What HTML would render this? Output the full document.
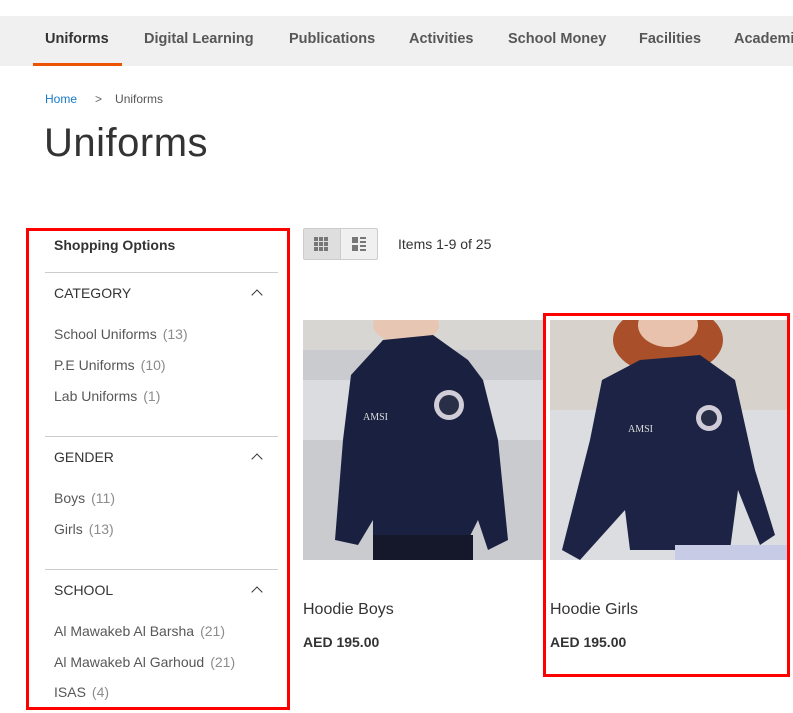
<!DOCTYPE html>
<html><head><meta charset="utf-8"><style>
*{margin:0;padding:0;box-sizing:border-box}
body{width:793px;height:713px;overflow:hidden;background:#fff;font-family:"Liberation Sans",sans-serif;color:#333;position:relative}
.a{position:absolute;white-space:nowrap}
.nav{position:absolute;left:0;top:16px;width:793px;height:50px;background:#f0f0f0}
.nav span{position:absolute;top:15px;font-weight:bold;font-size:14.5px;color:#575757}
.f{font-size:14px;color:#575757}
.f i{font-style:normal;color:#8c8c8c;margin-left:6px}
.h{font-size:14px;font-weight:bold;color:#333}
.line{position:absolute;left:45px;width:233px;height:1px;background:#ccc}
.chev{position:absolute;left:253px;width:8px;height:8px;border-left:1.5px solid #333;border-top:1.5px solid #333;transform:rotate(45deg)}
</style></head><body>
<div class="nav">
<span style="left:45px;color:#333">Uniforms</span>
<span style="left:144px">Digital Learning</span>
<span style="left:289px">Publications</span>
<span style="left:409px">Activities</span>
<span style="left:508px">School Money</span>
<span style="left:639px">Facilities</span>
<span style="left:734px">Academic</span>
<div style="position:absolute;left:33px;top:47px;width:89px;height:3px;background:#eb5202"></div>
</div>
<div class="a" style="left:45px;top:92px;font-size:12px"><span style="color:#1979c3">Home</span><span style="color:#666;margin:0 13px 0 18px">&gt;</span><span style="color:#555">Uniforms</span></div>
<div class="a" style="left:44px;top:121px;font-size:40px;font-weight:300;color:#333;letter-spacing:.5px">Uniforms</div>

<div style="position:absolute;left:26px;top:228px;width:264px;height:482px;border:3px solid #f00"></div>
<div class="a h" style="left:54px;top:237px">Shopping Options</div>
<div class="line" style="top:272px"></div>
<div class="a h" style="left:54px;top:285px;font-weight:normal;color:#333">CATEGORY</div><div class="chev" style="top:291px"></div>
<div class="a f" style="left:54px;top:326px">School Uniforms<i>(13)</i></div>
<div class="a f" style="left:54px;top:357px">P.E Uniforms<i>(10)</i></div>
<div class="a f" style="left:54px;top:388px">Lab Uniforms<i>(1)</i></div>
<div class="line" style="top:436px"></div>
<div class="a h" style="left:54px;top:449px;font-weight:normal">GENDER</div><div class="chev" style="top:455px"></div>
<div class="a f" style="left:54px;top:490px">Boys<i>(11)</i></div>
<div class="a f" style="left:54px;top:521px">Girls<i>(13)</i></div>
<div class="line" style="top:569px"></div>
<div class="a h" style="left:54px;top:582px;font-weight:normal">SCHOOL</div><div class="chev" style="top:588px"></div>
<div class="a f" style="left:54px;top:623px">Al Mawakeb Al Barsha<i>(21)</i></div>
<div class="a f" style="left:54px;top:654px">Al Mawakeb Al Garhoud<i>(21)</i></div>
<div class="a f" style="left:54px;top:684px">ISAS<i>(4)</i></div>

<div style="position:absolute;left:303px;top:228px;width:75px;height:32px;border:1px solid #ccc;border-radius:2px;background:#f0f0f0"></div>
<div style="position:absolute;left:304px;top:229px;width:37px;height:30px;background:#dedede;border-right:1px solid #ccc"></div>
<svg class="a" style="left:313px;top:236px" width="16" height="16"><g fill="#777"><rect x="1" y="1" width="4" height="4"/><rect x="6" y="1" width="4" height="4"/><rect x="11" y="1" width="4" height="4"/><rect x="1" y="6" width="4" height="4"/><rect x="6" y="6" width="4" height="4"/><rect x="11" y="6" width="4" height="4"/><rect x="1" y="11" width="4" height="4"/><rect x="6" y="11" width="4" height="4"/><rect x="11" y="11" width="4" height="4"/></g></svg>
<svg class="a" style="left:351px;top:236px" width="16" height="16"><g fill="#777"><rect x="1" y="1" width="6" height="6"/><rect x="9" y="1" width="6" height="2"/><rect x="9" y="5" width="6" height="2"/><rect x="1" y="9" width="6" height="6"/><rect x="9" y="9" width="6" height="2"/><rect x="9" y="13" width="6" height="2"/></g></svg>
<div class="a" style="left:398px;top:236px;font-size:14px;color:#333">Items 1-9 of 25</div>

<svg class="a" style="left:303px;top:320px" width="240" height="240">
<rect width="240" height="240" fill="#c9cbcf"/><rect y="0" width="240" height="30" fill="#d8d6d2"/><rect y="60" width="240" height="60" fill="#e6e7ea" opacity=".6"/>
<ellipse cx="103" cy="5" rx="33" ry="18" fill="#e8c6b4"/>
<path d="M80 20 L130 15 L165 40 L180 60 L195 120 L205 220 L185 230 L175 200 L165 220 L165 240 L70 240 L70 200 L55 225 L32 220 L40 120 L48 55 Z" fill="#1a2140"/>
<rect x="70" y="215" width="100" height="25" fill="#14182a"/>
<circle cx="146" cy="85" r="15" fill="#d0ccd8"/><circle cx="146" cy="85" r="10" fill="#2a2f48"/>
<text x="60" y="100" font-size="10" fill="#ddd" font-family="Liberation Serif">AMSI</text>
</svg>
<div style="position:absolute;left:543px;top:313px;width:247px;height:364px;border:3px solid #f00"></div>
<svg class="a" style="left:550px;top:320px" width="237" height="240">
<rect width="237" height="240" fill="#d7d3cc"/><rect y="90" width="237" height="150" fill="#dcdde0"/>
<ellipse cx="118" cy="20" rx="55" ry="35" fill="#a9502a"/><ellipse cx="118" cy="5" rx="30" ry="22" fill="#e8c2ad"/>
<path d="M90 40 L150 35 L185 60 L205 150 L225 215 L210 225 L188 170 L180 230 L80 230 L75 190 L30 240 L12 230 L40 120 L52 60 Z" fill="#1c2344"/>
<rect x="125" y="225" width="115" height="15" fill="#c8cbe6"/>
<circle cx="159" cy="98" r="13" fill="#d0ccd8"/><circle cx="159" cy="98" r="8" fill="#2a2f48"/>
<text x="78" y="112" font-size="10" fill="#ddd" font-family="Liberation Serif">AMSI</text>
</svg>
<div class="a" style="left:303px;top:601px;font-size:16px;color:#333">Hoodie Boys</div>
<div class="a" style="left:303px;top:634px;font-size:14px;font-weight:bold;color:#333">AED 195.00</div>
<div class="a" style="left:550px;top:601px;font-size:16px;color:#333">Hoodie Girls</div>
<div class="a" style="left:550px;top:634px;font-size:14px;font-weight:bold;color:#333">AED 195.00</div>
</body></html>
